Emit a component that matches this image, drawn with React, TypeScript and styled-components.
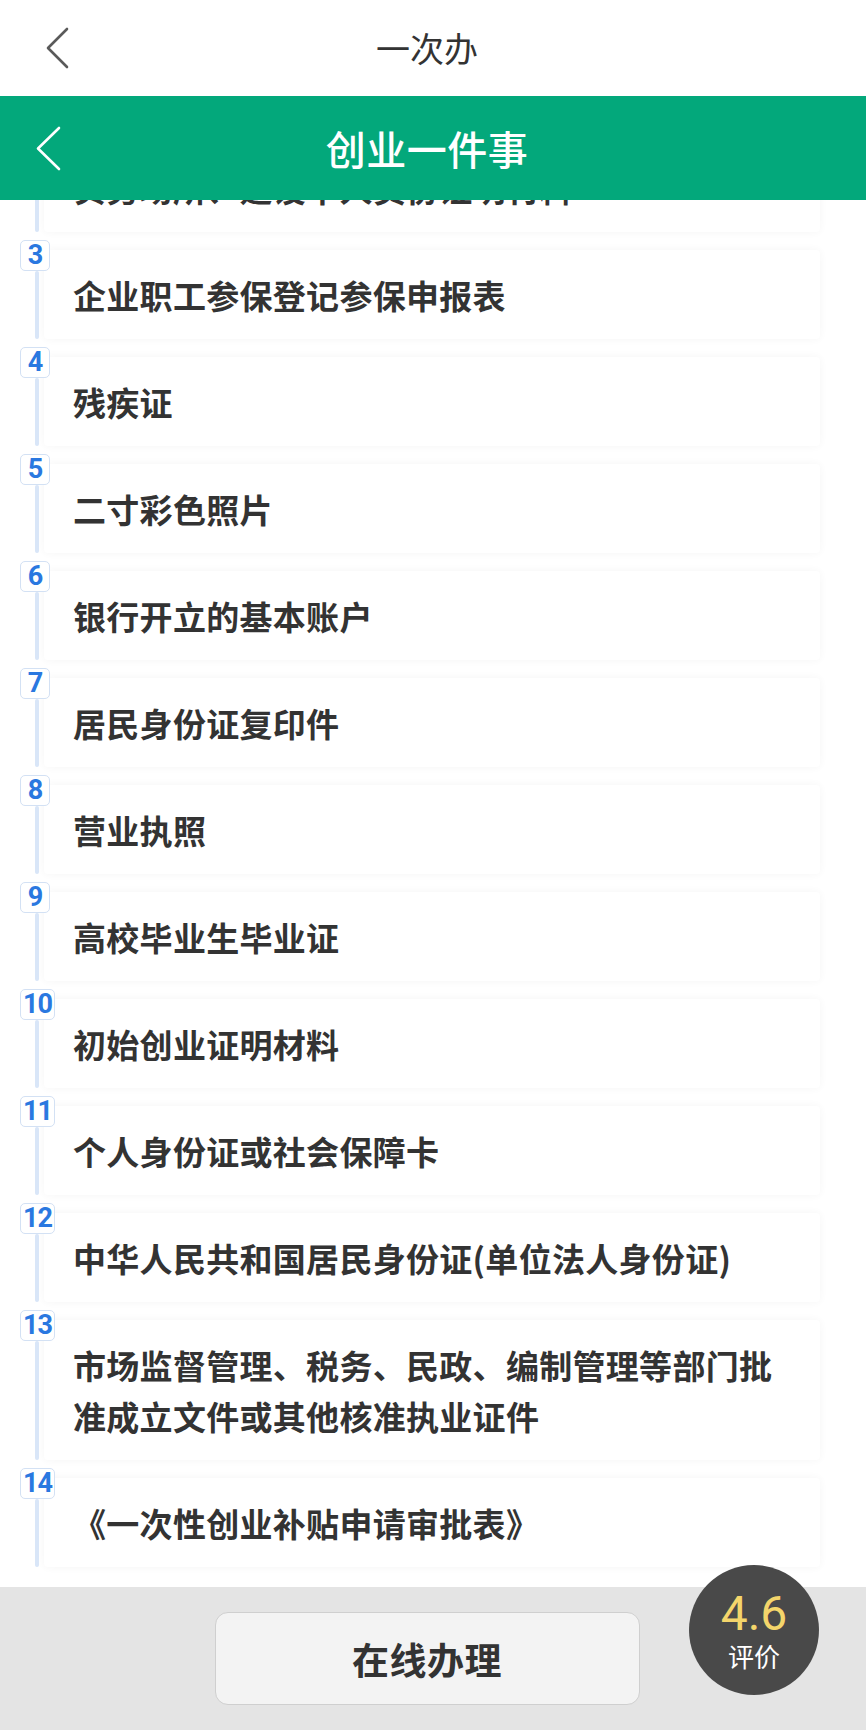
import React from "react";
import styled, { createGlobalStyle } from "styled-components";

const GlobalStyle = createGlobalStyle`
  html, body {
    margin: 0;
    padding: 0;
    background: #ffffff;
  }
  body {
    font-family: "Noto Sans CJK SC", "Noto Sans", sans-serif;
    color: #333333;
  }
  * { box-sizing: border-box; }
`;

const Page = styled.div`
  position: relative;
  width: 866px;
  height: 1730px;
  display: flex;
  flex-direction: column;
  overflow: hidden;
  background: #ffffff;
`;

const TopNav = styled.header`
  height: 96px;
  flex: none;
  display: grid;
  grid-template-columns: 90px 1fr 102px;
  align-items: center;
  background: #ffffff;
`;

const NavBack = styled.div<{ $left: number }>`
  display: flex;
  align-items: center;
  padding-left: ${(p) => p.$left}px;
`;

const NavTitle = styled.h1`
  margin: 0;
  text-align: center;
  font-size: 34px;
  font-weight: 400;
  color: #333333;
  line-height: 1;
`;

const GreenBar = styled.div`
  height: 104px;
  flex: none;
  display: grid;
  grid-template-columns: 80px 1fr 92px;
  align-items: center;
  background: #03a87b;
  position: relative;
  z-index: 2;
`;

const GreenTitle = styled.h2`
  margin: 0;
  text-align: center;
  font-size: 40px;
  font-weight: 500;
  color: #ffffff;
  line-height: 1;
  letter-spacing: 0.5px;
`;

const Viewport = styled.main`
  flex: 1;
  overflow: hidden;
  background: #ffffff;
`;

const List = styled.ol`
  list-style: none;
  margin: -67px 0 0 0;
  padding: 0 46px 0 20px;
  display: flex;
  flex-direction: column;
  gap: 8px;
`;

const Item = styled.li`
  display: flex;
  align-items: stretch;
`;

const Rail = styled.div`
  position: relative;
  z-index: 1;
  width: 30px;
  flex: none;
  display: flex;
  flex-direction: column;
  align-items: flex-start;
`;

const Badge = styled.span`
  height: 31px;
  min-width: 30px;
  padding: 0 2px;
  border: 1.5px solid #d3e1f4;
  border-radius: 5px;
  background: #ffffff;
  color: #2a78e0;
  font-family: Roboto, "Noto Sans", sans-serif;
  font-weight: 700;
  font-size: 27px;
  line-height: 28px;
  text-align: center;
  letter-spacing: -1px;
`;

const RailLine = styled.span`
  flex: 1;
  width: 4px;
  margin-left: 15px;
  background: #d9e6f8;
  border-radius: 2px;
`;

const Card = styled.div`
  flex: 1;
  margin-left: -6px;
  margin-top: 10px;
  padding: 20px 24px 18px 29px;
  background: #ffffff;
  border-radius: 4px;
  box-shadow: 0 0 8px rgba(0, 0, 0, 0.045);
`;

const ItemText = styled.p`
  margin: 0;
  font-size: 33px;
  font-weight: 700;
  line-height: 51px;
  color: #333333;
  letter-spacing: 0.3px;
`;

const BottomBar = styled.footer`
  height: 143px;
  flex: none;
  display: flex;
  align-items: center;
  justify-content: center;
  padding-right: 12px;
  background: #e4e4e4;
`;

const OnlineButton = styled.button`
  width: 425px;
  height: 93px;
  border: 1px solid #cfcfcf;
  border-radius: 13px;
  background: #f3f3f3;
  color: #333333;
  font-family: "Noto Sans CJK SC", sans-serif;
  font-size: 37px;
  font-weight: 700;
  letter-spacing: 0.5px;
  cursor: pointer;
`;

const RatingFab = styled.div`
  position: absolute;
  right: 47px;
  bottom: 35px;
  width: 130px;
  height: 130px;
  border-radius: 50%;
  background: #494949;
  display: flex;
  flex-direction: column;
  align-items: center;
  padding-top: 27px;
  gap: 6px;
  z-index: 3;
`;

const Score = styled.span`
  font-family: Roboto, "Noto Sans", sans-serif;
  font-weight: 400;
  font-size: 48px;
  line-height: 44px;
  color: #f4d56b;
`;

const ScoreLabel = styled.span`
  font-size: 26px;
  line-height: 28px;
  color: #ffffff;
`;

const Chevron = ({ color, w, h }: { color: string; w: number; h: number }) => (
  <svg width={w} height={h} viewBox={`0 0 ${w} ${h}`} fill="none">
    <path
      d={`M${w - 2} 2 L2 ${h / 2} L${w - 2} ${h - 2}`}
      stroke={color}
      strokeWidth={2.6}
      strokeLinecap="round"
      strokeLinejoin="round"
    />
  </svg>
);

const items: { n: number; text: string }[] = [
  { n: 2, text: "实务场所、建设中人员份证明材料" },
  { n: 3, text: "企业职工参保登记参保申报表" },
  { n: 4, text: "残疾证" },
  { n: 5, text: "二寸彩色照片" },
  { n: 6, text: "银行开立的基本账户" },
  { n: 7, text: "居民身份证复印件" },
  { n: 8, text: "营业执照" },
  { n: 9, text: "高校毕业生毕业证" },
  { n: 10, text: "初始创业证明材料" },
  { n: 11, text: "个人身份证或社会保障卡" },
  { n: 12, text: "中华人民共和国居民身份证(单位法人身份证)" },
  {
    n: 13,
    text: "市场监督管理、税务、民政、编制管理等部门批准成立文件或其他核准执业证件",
  },
  { n: 14, text: "《一次性创业补贴申请审批表》" },
];

export default function App() {
  return (
    <>
      <GlobalStyle />
      <Page>
        <TopNav>
          <NavBack $left={46}>
            <Chevron color="#5a5a5a" w={23} h={42} />
          </NavBack>
          <NavTitle>一次办</NavTitle>
          <div />
        </TopNav>
        <GreenBar>
          <NavBack $left={36}>
            <Chevron color="#ffffff" w={25} h={45} />
          </NavBack>
          <GreenTitle>创业一件事</GreenTitle>
          <div />
        </GreenBar>
        <Viewport>
          <List>
            {items.map((it) => (
              <Item key={it.n}>
                <Rail>
                  <Badge>{it.n}</Badge>
                  <RailLine />
                </Rail>
                <Card>
                  <ItemText>{it.text}</ItemText>
                </Card>
              </Item>
            ))}
          </List>
        </Viewport>
        <BottomBar>
          <OnlineButton>在线办理</OnlineButton>
        </BottomBar>
        <RatingFab>
          <Score>4.6</Score>
          <ScoreLabel>评价</ScoreLabel>
        </RatingFab>
      </Page>
    </>
  );
}
